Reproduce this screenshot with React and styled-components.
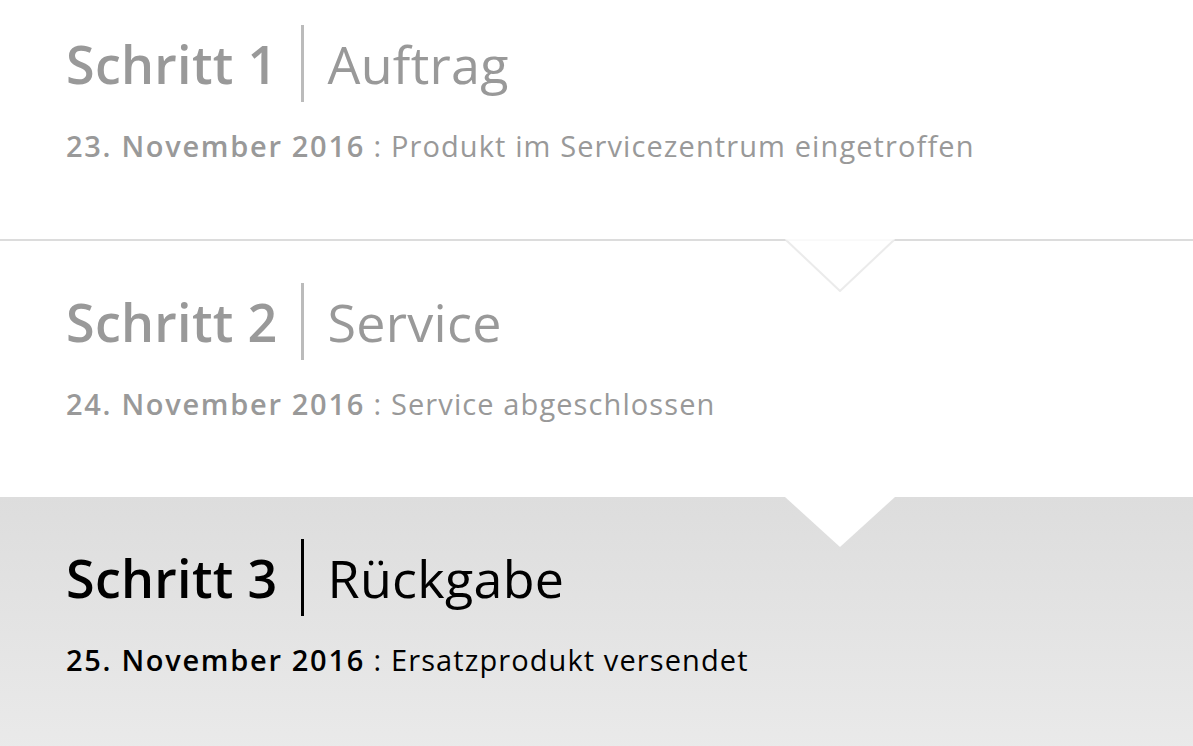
import React from 'react';
import styled, { createGlobalStyle } from 'styled-components';

const GlobalStyle = createGlobalStyle`
  html, body {
    margin: 0;
    padding: 0;
    background: #ffffff;
    overflow: hidden;
  }
  body {
    font-family: "Open Sans", "DejaVu Sans", sans-serif;
  }
`;

const Timeline = styled.main`
  display: flex;
  flex-direction: column;
  width: 1193px;
  height: 746px;
  overflow: hidden;
`;

const Step = styled.section`
  position: relative;
  box-sizing: border-box;
  flex: none;
  height: ${(p) => p.$height}px;
  margin-top: ${(p) => p.$offset || 0}px;
  padding: 42px 0 0 66px;
  background: ${(p) =>
    p.$active ? 'linear-gradient(#dddddd, #eaeaea)' : '#ffffff'};
  border-bottom: ${(p) => (p.$line ? '2px solid #dcdcdc' : 'none')};
  color: ${(p) => (p.$active ? '#000000' : '#999999')};
`;

const NotchSvg = styled.svg`
  position: absolute;
  z-index: 2;
  top: 100%;
  left: 785px;
  display: block;
`;

const Notch = ({ outlined }) => (
  <NotchSvg width="110" height={outlined ? 53 : 50} viewBox={`0 0 110 ${outlined ? 53 : 50}`}>
    {outlined ? (
      <>
        <polygon points="0,0 110,0 55,52" fill="#ffffff" />
        <polyline points="1,1 55,52 109,1" fill="none" stroke="#ebebeb" strokeWidth="2" />
        <line x1="2" y1="1" x2="108" y2="1" stroke="#f4f4f4" strokeWidth="1" />
      </>
    ) : (
      <polygon points="0,0 110,0 55,50" fill="#ffffff" />
    )}
  </NotchSvg>
);

const Heading = styled.h2`
  display: flex;
  align-items: center;
  margin: 0;
  font-size: 52px;
  line-height: 1;
  letter-spacing: 0.3px;
`;

const StepNo = styled.span`
  font-weight: 600;
`;

const Divider = styled.span`
  width: 3px;
  height: 77px;
  margin: 0 23px 0 24px;
  background: ${(p) => (p.$active ? '#000000' : '#bbbbbb')};
`;

const Title = styled.span`
  font-weight: 400;
`;

const Status = styled.p`
  margin: 27px 0 0;
  font-size: 29px;
  line-height: 1.2;
  letter-spacing: 1.1px;
  white-space: nowrap;
`;

const StatusDate = styled.strong`
  font-weight: 600;
  letter-spacing: 1.7px;
`;

const steps = [
  {
    no: 1,
    title: 'Auftrag',
    date: '23. November 2016',
    text: 'Produkt im Servicezentrum eingetroffen',
  },
  {
    no: 2,
    title: 'Service',
    date: '24. November 2016',
    text: 'Service abgeschlossen',
  },
  {
    no: 3,
    title: 'Rückgabe',
    date: '25. November 2016',
    text: 'Ersatzprodukt versendet',
  },
];

const App = () => (
  <>
    <GlobalStyle />
    <Timeline>
      {steps.map((step, i) => {
        const active = i === steps.length - 1;
        return (
          <Step
            key={step.no}
            $active={active}
            $line={i === 0}
            $offset={i === 0 ? -17 : 0}
            $height={i === 0 ? 258 : 256}
          >
            <Heading>
              <StepNo>Schritt {step.no}</StepNo>
              <Divider $active={active} />
              <Title>{step.title}</Title>
            </Heading>
            <Status>
              <StatusDate>{step.date}</StatusDate> : {step.text}
            </Status>
            {!active && <Notch outlined={i === 0} />}
          </Step>
        );
      })}
    </Timeline>
  </>
);

export default App;
